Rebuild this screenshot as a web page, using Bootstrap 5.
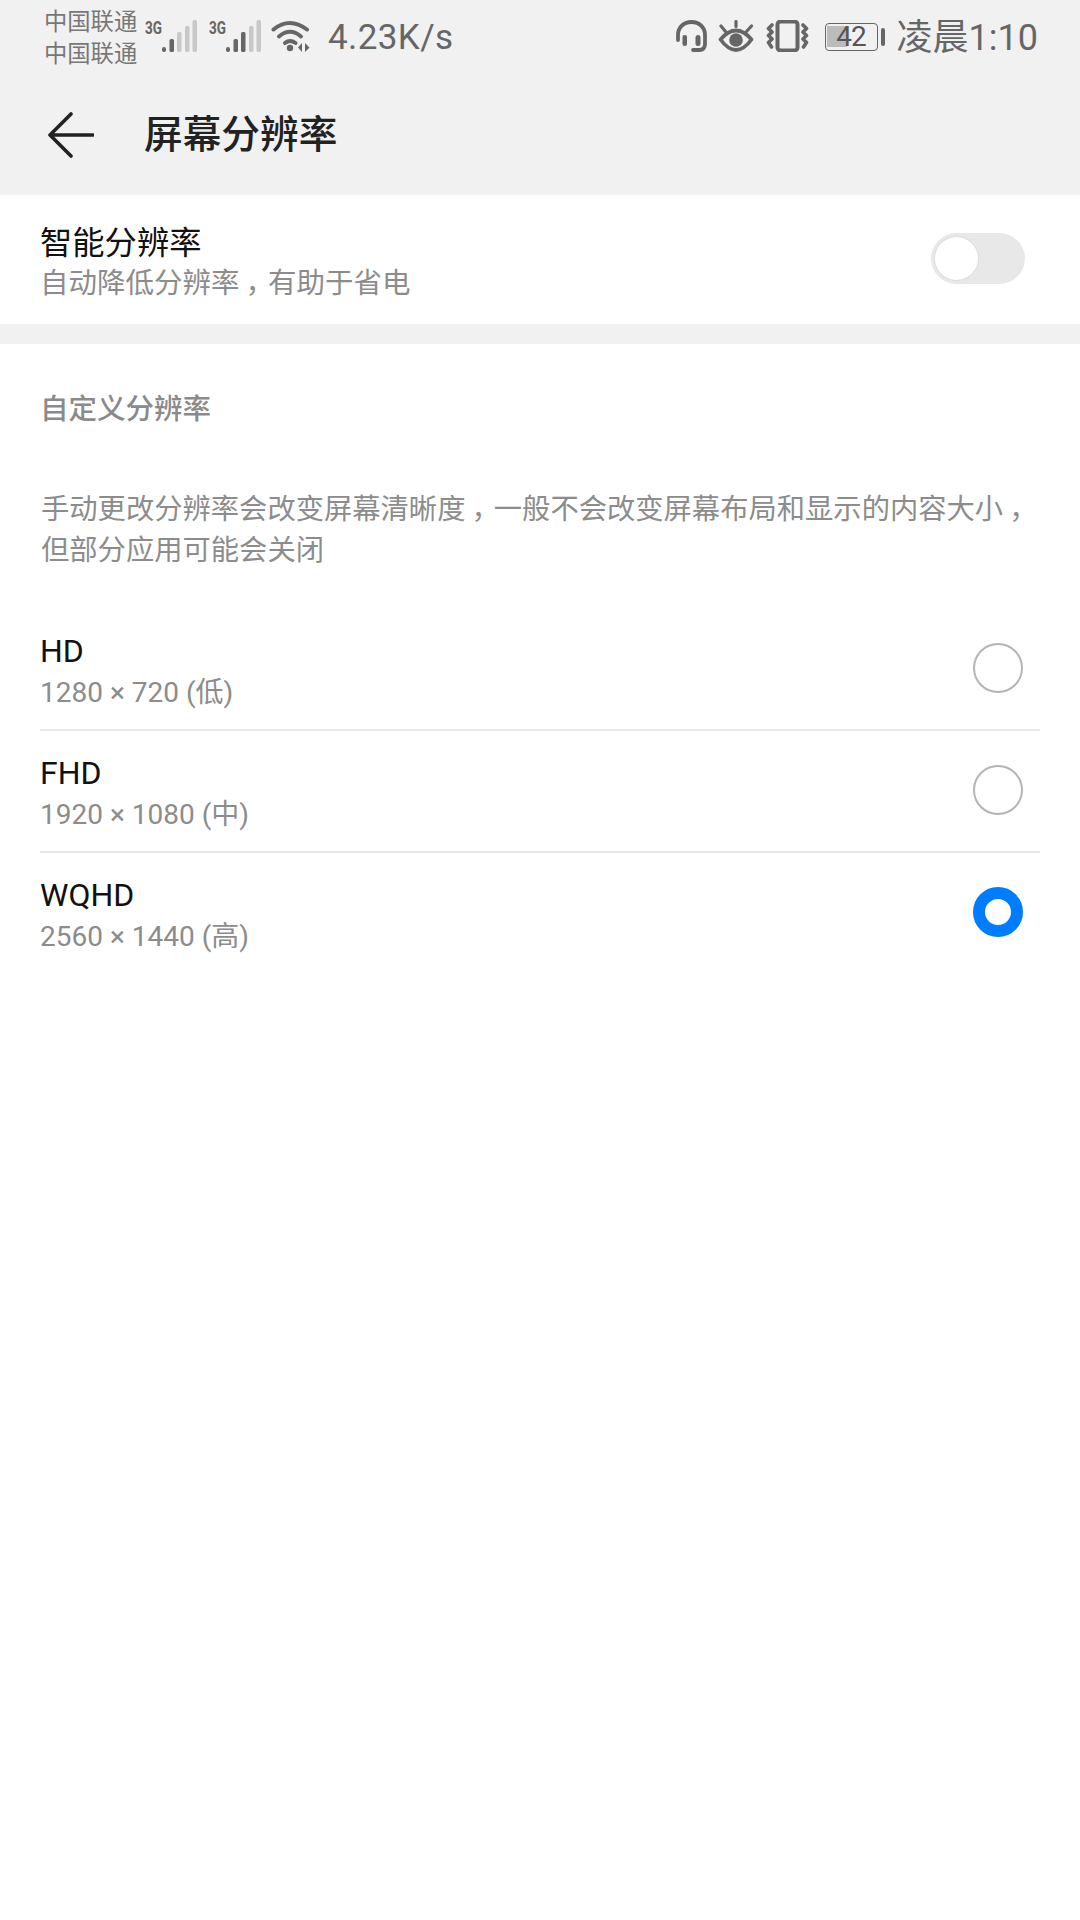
<!DOCTYPE html>
<html lang="zh-CN">
<head>
    <meta charset="UTF-8">
    <meta name="viewport" content="width=device-width, initial-scale=1">
    <title>屏幕分辨率</title>
    <link href="https://cdn.jsdelivr.net/npm/bootstrap@5.3.0/dist/css/bootstrap.min.css" rel="stylesheet">
    <style>
        body {
            width: 1080px;
            height: 1920px;
            background: #fff;
            font-family: Roboto, "Noto Sans CJK SC", sans-serif;
            overflow: hidden;
        }
        .top-area { background: #f1f1f1; height: 195px; }
        .status-row { height: 72px; padding: 0 42px 0 44px; color: #666; }
        .carriers { font-size: 23.3px; line-height: 32px; width: 101px; color: #777; white-space: nowrap; margin-top: 3px; }
        .sig-two { margin-left: 12px; }
        .wifi-ico { margin-left: 10px; }
        .speed { font-size: 35px; letter-spacing: .4px; margin-left: 18px; margin-top: 5px; }
        .ico-eye { margin-left: 11px; }
        .ico-vib { margin-left: 12px; }
        .batt-wrap { margin-left: 16px; width: 60px; margin-top: 1px; }
        .batt-box { position: relative; width: 53px; height: 28px; border: 1.5px solid #666; border-radius: 4px; font-size: 28px; line-height: 25px; letter-spacing: -1px; text-align: center; color: #555; }
        .batt-fill { position: absolute; left: 1px; top: 2px; width: 20px; height: 21px; background: #bbb; }
        .batt-num { position: relative; }
        .batt-nub { width: 4px; height: 18px; border-radius: 2px; background: #666; margin-left: 3px; }
        .clock { font-size: 36px; margin-left: 12px; margin-top: 3px; }
        .header-row { height: 123px; padding-left: 48px; padding-top: 2px; }
        .page-title { font-size: 38.7px; font-weight: 500; color: #222; margin: 2px 0 0 50px; line-height: 1; }
        .smart-row { height: 129px; padding: 0 55px 0 40px; }
        .smart-text { padding-top: 9px; }
        .row-title { font-size: 32.3px; line-height: 40px; color: #111; }
        .row-sub { font-size: 28.5px; line-height: 42px; color: #8c8c8c; }
        .cn-comma { margin-left: 6px; letter-spacing: -6px; }
        .switch-track { width: 94px; height: 51px; border-radius: 26px; background: #e8e8e8; padding: 4px; margin-bottom: 3px; }
        .switch-knob { width: 43px; height: 43px; border-radius: 50%; background: #fff; box-shadow: 0 0 0 1px #ddd; }
        .gap-band { height: 20px; background: #f1f1f1; }
        .section-label { font-size: 28.5px; font-weight: 500; color: #8a8a8a; padding: 46px 40px 0; line-height: 40px; }
        .section-desc { font-size: 28.3px; line-height: 41px; color: #8c8c8c; padding: 59px 30px 0 41px; white-space: nowrap; }
        .res-list { margin: 38px 40px 0 40px; }
        .res-item { height: 122px; display: flex; align-items: center; justify-content: space-between; padding-right: 17px; padding-bottom: 2px; border-bottom: 2px solid #e8e8e8; }
        .res-item:last-child { border-bottom-color: transparent; }
        .res-text { padding-top: 8px; }
        .res-name { font-size: 32px; line-height: 41px; color: #111; }
        .res-size { font-size: 28px; line-height: 41px; color: #8c8c8c; }
        .radio-off { width: 50px; height: 50px; border-radius: 50%; border: 2.5px solid #b4b4b4; }
        .radio-on { width: 50px; height: 50px; border-radius: 50%; border: 12.5px solid #007dff; }
    </style>
</head>
<body>

<div class="top-area">
    <div class="status-row d-flex align-items-center">
        <div class="carriers">中国联通<br>中国联通</div>
        <svg class="overflow-visible" width="52" height="32" viewBox="0 0 52 32">
            <text x="0" y="13.5" font-family="Roboto" font-size="18" font-weight="700" fill="#666" textLength="17" lengthAdjust="spacingAndGlyphs">3G</text>
            <rect x="17" y="27" width="4" height="5" rx="2" fill="#666"/>
            <rect x="24.5" y="19" width="4.5" height="13" rx="1.5" fill="#666"/>
            <rect x="32" y="12" width="4.5" height="20" rx="1.5" fill="#c8c8c8"/>
            <rect x="40" y="6" width="4.5" height="26" rx="1.5" fill="#c8c8c8"/>
            <rect x="47.5" y="0" width="4.5" height="32" rx="1.5" fill="#c8c8c8"/>
        </svg>
        <svg class="sig-two overflow-visible" width="52" height="32" viewBox="0 0 52 32">
            <text x="0" y="13.5" font-family="Roboto" font-size="18" font-weight="700" fill="#666" textLength="17" lengthAdjust="spacingAndGlyphs">3G</text>
            <rect x="17" y="27" width="4" height="5" rx="2" fill="#666"/>
            <rect x="24.5" y="19" width="4.5" height="13" rx="1.5" fill="#666"/>
            <rect x="32" y="12" width="4.5" height="20" rx="1.5" fill="#666"/>
            <rect x="40" y="6" width="4.5" height="26" rx="1.5" fill="#c8c8c8"/>
            <rect x="47.5" y="0" width="4.5" height="32" rx="1.5" fill="#c8c8c8"/>
        </svg>
        <svg class="wifi-ico" width="39" height="32" viewBox="0 0 39 32" fill="none" stroke="#666" stroke-width="4" stroke-linecap="round">
            <path d="M2.5 9.5Q18.5 -3.5 36 9.5"/>
            <path d="M8 16.5Q19 7 30 16.5"/>
            <path d="M14 23Q19 19 24.5 23"/>
            <circle cx="19" cy="28" r="3.2" fill="#666" stroke="none"/>
            <path d="M27 27.5L31 23V32ZM34 23V32L38.5 27.5Z" fill="#666" stroke="none"/>
        </svg>
        <span class="speed">4.23K/s</span>
        <div class="flex-grow-1"></div>
        <svg width="31" height="32" viewBox="0 0 31 32" fill="none" stroke="#666" stroke-width="3.8" stroke-linecap="round">
            <path d="M2 20V15C2 7 8 2 15.5 2S29 7 29 15V24C29 28 27 30 23 30H17"/>
            <rect x="6.5" y="15" width="4.500" height="11" rx="2" fill="#666" stroke="none"/>
            <rect x="19.5" y="15" width="5" height="11" rx="2.5" fill="#666" stroke="none"/>
        </svg>
        <svg class="ico-eye" width="36" height="32" viewBox="0 0 36 32" fill="none" stroke="#666" stroke-width="3.8" stroke-linecap="round" stroke-linejoin="round">
            <path d="M2.500 19.500C8 13 13 10.500 18 10.500S28 13 33.500 19.500C28 27 23 30 18 30S8 27 2.500 19.500Z"/>
            <circle cx="18" cy="20" r="6.800" fill="#666" stroke="none"/>
            <path d="M18 1.500V6.500M3 6L7.500 11.500M33.500 6L28.500 11.500" stroke-width="3.200"/>
        </svg>
        <svg class="ico-vib" width="43" height="32" viewBox="0 0 43 32" fill="none" stroke="#666" stroke-linecap="round" stroke-linejoin="round">
            <rect x="11.500" y="1.500" width="20" height="29" rx="3" stroke-width="4"/>
            <path d="M6 5L2.500 8.500L6 12L2.500 15.500L6 19L2.500 22.500L5.500 27" stroke-width="3.600"/>
            <path d="M37 5L40.500 8.500L37 12L40.500 15.500L37 19L40.500 22.500L37.500 27" stroke-width="3.600"/>
        </svg>
        <div class="batt-wrap d-flex align-items-center">
            <div class="batt-box flex-shrink-0"><span class="batt-fill"></span><span class="batt-num">42</span></div>
            <div class="batt-nub flex-shrink-0"></div>
        </div>
        <span class="clock">凌晨1:10</span>
    </div>
    <div class="header-row d-flex align-items-center">
        <svg width="46" height="46" viewBox="0 0 46 46" fill="none" stroke="#222" stroke-width="3.6" stroke-linecap="round" stroke-linejoin="round">
            <path d="M23 2L2 23L23 44M2 23H45"/>
        </svg>
        <h1 class="page-title">屏幕分辨率</h1>
    </div>
</div>

<div class="smart-row d-flex align-items-center justify-content-between">
    <div class="smart-text">
        <div class="row-title">智能分辨率</div>
        <div class="row-sub">自动降低分辨率<span class="cn-comma">，</span>有助于省电</div>
    </div>
    <div class="switch-track"><div class="switch-knob"></div></div>
</div>

<div class="gap-band"></div>

<div class="section-label">自定义分辨率</div>
<div class="section-desc">手动更改分辨率会改变屏幕清晰度<span class="cn-comma">，</span>一般不会改变屏幕布局和显示的内容大小<span class="cn-comma">，</span><br>但部分应用可能会关闭</div>

<div class="res-list">
    <div class="res-item">
        <div class="res-text">
            <div class="res-name">HD</div>
            <div class="res-size">1280 × 720 (低)</div>
        </div>
        <div class="radio-off"></div>
    </div>
    <div class="res-item">
        <div class="res-text">
            <div class="res-name">FHD</div>
            <div class="res-size">1920 × 1080 (中)</div>
        </div>
        <div class="radio-off"></div>
    </div>
    <div class="res-item">
        <div class="res-text">
            <div class="res-name">WQHD</div>
            <div class="res-size">2560 × 1440 (高)</div>
        </div>
        <div class="radio-on"></div>
    </div>
</div>

<script src="https://cdn.jsdelivr.net/npm/bootstrap@5.3.0/dist/js/bootstrap.bundle.min.js"></script>
</body>
</html>
